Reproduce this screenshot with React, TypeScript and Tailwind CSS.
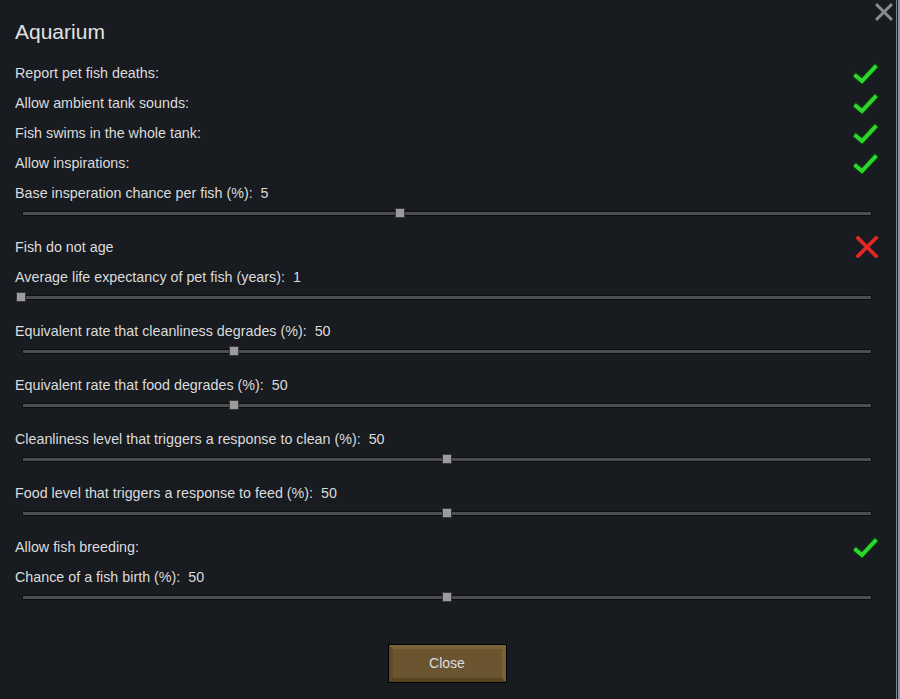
import React from "react";

const Check = () => (
  <svg width="26" height="22" viewBox="0 0 26 22" className="block">
    <polyline points="3,14 9,19 22,5" fill="none" stroke="#0b3a0b" strokeWidth="6.4" strokeLinecap="square" strokeLinejoin="miter" />
    <polyline points="3,14 9,19 22,5" fill="none" stroke="#2fd52f" strokeWidth="4" strokeLinecap="square" strokeLinejoin="miter" />
  </svg>
);

const Cross = () => (
  <svg width="24" height="22" viewBox="0 0 24 22" className="block">
    <path d="M3 2 L21 20 M21 2 L3 20" stroke="#e32626" strokeWidth="3.8" strokeLinecap="square" />
  </svg>
);

const Toggle = ({ label, on }: { label: string; on: boolean }) => (
  <div className="h-[30px] flex items-center justify-between pr-[17px]">
    <span className="pt-[2px]">{label}</span>
    {on ? <Check /> : <Cross />}
  </div>
);

const Slider = ({ label, value, frac }: { label: string; value: string; frac: number }) => (
  <div>
    <div className="h-[30px] flex items-center">
      <span className="pt-[2px]">{label}:&nbsp;&nbsp;{value}</span>
    </div>
    <div className="relative h-[24px]">
      <div className="absolute left-[7px] top-[3px] w-[850px] h-[5px] bg-[#4b4d50] border border-[#0c0d0f] rounded-[1px]" />
      <div
        className="absolute top-0 w-[10px] h-[10px] bg-[#9c9c9c] border border-[#3a3a3a]"
        style={{ left: `${1 + frac * 850}px` }}
      />
    </div>
  </div>
);

export default function App() {
  return (
    <div
      className="relative w-[900px] h-[699px] bg-[#181b20] text-[#dcdcdc] text-[14.3px] overflow-hidden"
      style={{ fontFamily: '"Liberation Sans", Arial, sans-serif' }}
    >
      <div className="absolute right-0 top-0 h-full flex">
        <div className="w-px bg-[#7d828c]" />
        <div className="w-px bg-[#1d2026]" />
        <div className="w-px bg-[#8b93a6]" />
        <div className="w-px bg-[#9a8ea8]" />
      </div>
      <svg width="20" height="20" viewBox="0 0 20 20" className="absolute left-[874px] top-[2px]">
        <path d="M2 2 L18 18 M18 2 L2 18" stroke="#8b8b8b" strokeWidth="3" strokeLinecap="butt" />
      </svg>
      <div className="pl-[15px] w-[896px]">
        <div className="h-[58px] flex items-center pt-[6px] text-[21px] text-[#e2e2e2]">Aquarium</div>
        <Toggle label="Report pet fish deaths:" on />
        <Toggle label="Allow ambient tank sounds:" on />
        <Toggle label="Fish swims in the whole tank:" on />
        <Toggle label="Allow inspirations:" on />
        <Slider label="Base insperation chance per fish (%)" value="5" frac={0.446} />
        <Toggle label="Fish do not age" on={false} />
        <Slider label="Average life expectancy of pet fish (years)" value="1" frac={0} />
        <Slider label="Equivalent rate that cleanliness degrades (%)" value="50" frac={0.251} />
        <Slider label="Equivalent rate that food degrades (%)" value="50" frac={0.251} />
        <Slider label="Cleanliness level that triggers a response to clean (%)" value="50" frac={0.501} />
        <Slider label="Food level that triggers a response to feed (%)" value="50" frac={0.501} />
        <Toggle label="Allow fish breeding:" on />
        <Slider label="Chance of a fish birth (%)" value="50" frac={0.501} />
      </div>
      <div className="w-[894px] flex justify-center mt-[28px]">
        <button className="w-[119px] h-[39px] border border-black bg-[#6b5530] relative text-[14px] text-[#dedede]">
          <span className="absolute inset-0 border-t-[4px] border-l-[4px] border-b-[4px] border-r-[4px] border-t-[#7b6239] border-l-[#5e4a29] border-b-[#56441f] border-r-[#7a6238]" />
          <span className="relative">Close</span>
        </button>
      </div>
    </div>
  );
}
